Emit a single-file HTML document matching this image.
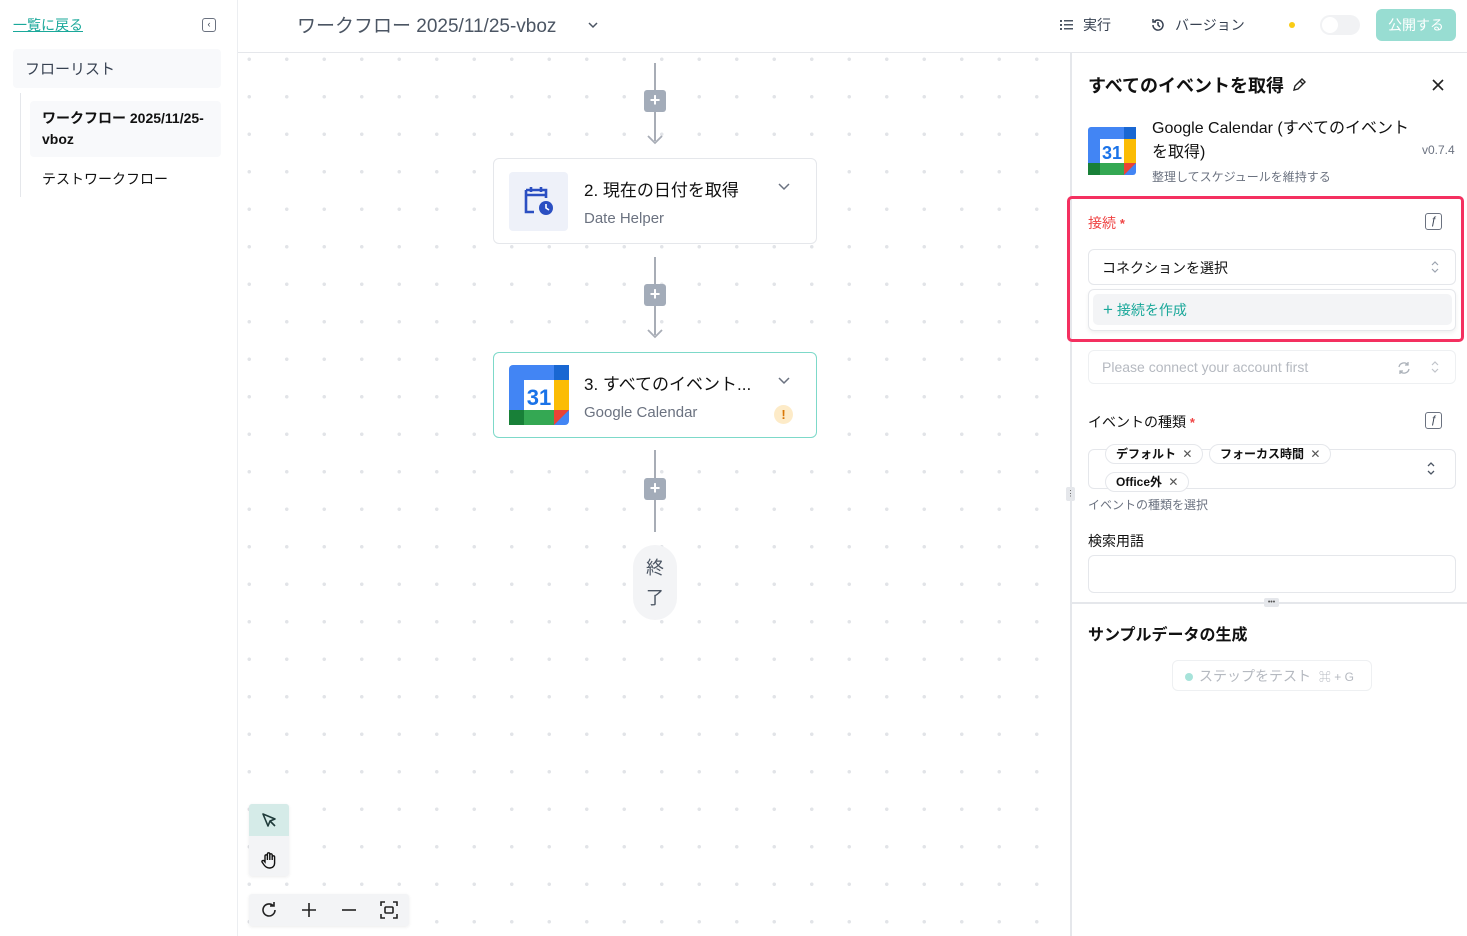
<!DOCTYPE html>
<html><head><meta charset="utf-8"><style>
*{box-sizing:border-box;margin:0;padding:0}
body{width:1467px;height:936px;overflow:hidden;position:relative;background:#fff;font-family:"Liberation Sans","Noto Sans CJK JP",sans-serif;color:#1f2937}
.abs{position:absolute}
.canvas{left:238px;top:53px;width:833px;height:883px;background-color:#fff;background-image:radial-gradient(circle,#e2e4e8 1.6px,transparent 2px);background-size:37.5px 37.5px;background-position:-7.5px -12.5px}
.node{background:#fff;border:1px solid #e5e7eb;border-radius:6px}
.line{background:#a8adb6;width:2px}
.plus{width:22px;height:22px;background:#a3acb9;border-radius:3px;color:#fff;font-size:18px;line-height:21px;text-align:center;font-weight:bold}
.chip{position:absolute;height:20px;border:1px solid #e5e7eb;border-radius:10px;font-size:12px;font-weight:bold;padding:0 10px;line-height:18px;background:#fff;color:#111}
.fx{width:17px;height:17px;border:1.5px solid #6b7280;border-radius:3px;font-size:11px;font-style:italic;text-align:center;line-height:14px;color:#374151}
.ast{color:#ef4444;font-size:13px;font-weight:bold}
</style></head><body>
<div class="abs" style="left:0;top:0;width:238px;height:936px;border-right:1px solid #eceef1;background:#fff"></div>
<div class="abs" style="left:13px;top:15px;font-size:14px;color:#1aa89a;text-decoration:underline">一覧に戻る</div>
<div class="abs" style="left:202px;top:18px;width:14px;height:14px;border:1.5px solid #6b7280;border-radius:3px;font-size:9px;line-height:11px;text-align:center;color:#374151">‹</div>
<div class="abs" style="left:13px;top:49px;width:208px;height:39px;background:#f8f9fb;border-radius:4px;font-size:15px;padding:9px 12px;color:#374151">フローリスト</div>
<div class="abs" style="left:20px;top:93px;width:1px;height:104px;background:#e5e7eb"></div>
<div class="abs" style="left:30px;top:101px;width:191px;height:56px;background:#f8f9fb;border-radius:4px;font-size:14px;font-weight:bold;padding:7px 12px;line-height:21px;color:#111">ワークフロー 2025/11/25-vboz</div>
<div class="abs" style="left:42px;top:169px;font-size:14px;color:#111">テストワークフロー</div>
<div class="abs" style="left:238px;top:0;width:1229px;height:53px;border-bottom:1px solid #e5e7eb;background:#fff"></div>
<div class="abs" style="left:297px;top:11px;font-size:19px;color:#4b5563">ワークフロー 2025/11/25-vboz</div>
<svg class="abs" style="left:587px;top:20px" width="12" height="10"><path d="M2 3l4 4 4-4" stroke="#4b5563" fill="none" stroke-width="1.5"/></svg>
<svg class="abs" style="left:1059px;top:18px" width="16" height="14"><g fill="#4b5563"><rect x="1" y="2" width="2" height="2"/><rect x="1" y="6" width="2" height="2"/><rect x="1" y="10" width="2" height="2"/><rect x="5" y="2" width="9" height="1.5"/><rect x="5" y="6" width="9" height="1.5"/><rect x="5" y="10" width="9" height="1.5"/></g></svg>
<div class="abs" style="left:1083px;top:15px;font-size:14px;color:#374151">実行</div>
<svg class="abs" style="left:1150px;top:17px" width="16" height="16"><path d="M3 8a5 5 0 1 0 1.5-3.5M3 2v3h3M8 5v3l2 2" stroke="#374151" fill="none" stroke-width="1.5"/></svg>
<div class="abs" style="left:1175px;top:15px;font-size:14px;color:#374151">バージョン</div>
<div class="abs" style="left:1289px;top:22px;width:6px;height:6px;border-radius:50%;background:#facc15"></div>
<div class="abs" style="left:1320px;top:15px;width:40px;height:20px;border-radius:10px;background:#f1f2f4"><div style="margin:2px;width:16px;height:16px;border-radius:50%;background:#fff"></div></div>
<div class="abs" style="left:1376px;top:9px;width:80px;height:32px;border-radius:6px;background:#98ddd2;color:#fff;font-size:14px;text-align:center;line-height:32px">公開する</div>
<div class="abs canvas"></div>
<div class="abs line" style="left:654px;top:63px;height:78px"></div>
<div class="abs plus" style="left:644px;top:90px">+</div>
<svg class="abs" style="left:647px;top:134px" width="16" height="12"><path d="M1 2l7 7 7-7" stroke="#a8adb6" fill="none" stroke-width="1.8"/></svg>
<div class="abs node" style="left:493px;top:158px;width:324px;height:86px"></div>
<div class="abs" style="left:509px;top:172px;width:59px;height:59px;background:#eef1f9;border-radius:4px"></div>
<svg class="abs" style="left:522px;top:184px" width="34" height="34"><path d="M4 6h20v8M4 6v22h8M4 11h20M9 3v5M19 3v5" stroke="#2b4fc2" stroke-width="2.6" fill="none"/><circle cx="24" cy="24" r="7" fill="#2b4fc2"/><path d="M24 20v4l3 2" stroke="#fff" stroke-width="1.6" fill="none"/></svg>
<div class="abs" style="left:584px;top:176px;font-size:17px;color:#111">2. 現在の日付を取得</div>
<div class="abs" style="left:584px;top:210px;font-size:15px;color:#6b7280">Date Helper</div>
<svg class="abs" style="left:777px;top:182px" width="14" height="10"><path d="M2 2l5 5 5-5" stroke="#6b7280" fill="none" stroke-width="1.5"/></svg>
<div class="abs line" style="left:654px;top:257px;height:78px"></div>
<div class="abs plus" style="left:644px;top:284px">+</div>
<svg class="abs" style="left:647px;top:328px" width="16" height="12"><path d="M1 2l7 7 7-7" stroke="#a8adb6" fill="none" stroke-width="1.8"/></svg>
<div class="abs node" style="left:493px;top:352px;width:324px;height:86px;border:1.5px solid #7dd9c9"></div>
<svg class="abs" style="left:509px;top:365px" width="60" height="60"><rect x="0" y="0" width="60" height="60" rx="4" fill="#4285f4"/><rect x="45" y="0" width="15" height="15" fill="#1967d2"/><rect x="45" y="15" width="15" height="30" fill="#fbbc04"/><rect x="0" y="45" width="15" height="15" fill="#188038"/><rect x="15" y="45" width="30" height="15" fill="#34a853"/><path d="M45 45h15L45 60z" fill="#ea4335"/><rect x="15" y="15" width="30" height="30" fill="#fff"/><text x="30" y="40" font-size="22" font-weight="bold" fill="#1a73e8" text-anchor="middle" font-family="Liberation Sans">31</text></svg>
<div class="abs" style="left:584px;top:370px;font-size:17px;color:#111">3. すべてのイベント...</div>
<div class="abs" style="left:584px;top:404px;font-size:15px;color:#6b7280">Google Calendar</div>
<svg class="abs" style="left:777px;top:376px" width="14" height="10"><path d="M2 2l5 5 5-5" stroke="#6b7280" fill="none" stroke-width="1.5"/></svg>
<div class="abs" style="left:774px;top:405px;width:19px;height:19px;border-radius:50%;background:#fdebc8;color:#d97706;font-weight:bold;font-size:13px;text-align:center;line-height:19px">!</div>
<div class="abs line" style="left:654px;top:450px;height:82px"></div>
<div class="abs plus" style="left:644px;top:478px">+</div>
<div class="abs" style="left:633px;top:545px;width:44px;height:75px;border-radius:22px;background:#f3f4f6;font-size:18px;color:#4b5563;text-align:center;line-height:30px;padding-top:8px">終<br>了</div>
<div class="abs" style="left:249px;top:804px;width:40px;height:72px;background:#f3f4f6;border-radius:3px;box-shadow:0 1px 3px rgba(0,0,0,.08)"><div style="height:32px;background:#d5ebe8;border-radius:3px 3px 0 0"></div></div>
<svg class="abs" style="left:260px;top:811px" width="18" height="18"><path d="M3 3l12 5-5 2-2 5z M10 10l5 5" stroke="#1f3b3a" fill="none" stroke-width="1.6" stroke-linejoin="round"/></svg>
<svg class="abs" style="left:259px;top:850px" width="20" height="20"><path d="M6 12V6a1.2 1.2 0 0 1 2.4 0v4V4a1.2 1.2 0 0 1 2.4 0v6V5a1.2 1.2 0 0 1 2.4 0v5V7a1.2 1.2 0 0 1 2.4 0v6c0 3-2 5-5 5-2.5 0-4-1-5.5-3L3 12a1.2 1.2 0 0 1 2-1.2z" stroke="#111" fill="none" stroke-width="1.4"/></svg>
<div class="abs" style="left:249px;top:894px;width:160px;height:32px;background:#f3f4f6;border-radius:3px;box-shadow:0 1px 3px rgba(0,0,0,.08)"></div>
<svg class="abs" style="left:259px;top:900px" width="20" height="20"><path d="M16 10a6 6 0 1 1-2-4.5M15 2v4h-4" stroke="#222" fill="none" stroke-width="1.6"/></svg>
<svg class="abs" style="left:299px;top:900px" width="20" height="20"><path d="M10 3v14M3 10h14" stroke="#222" stroke-width="1.6"/></svg>
<svg class="abs" style="left:339px;top:900px" width="20" height="20"><path d="M3 10h14" stroke="#222" stroke-width="1.6"/></svg>
<svg class="abs" style="left:379px;top:900px" width="20" height="20"><path d="M2 6V2h4M14 2h4v4M18 14v4h-4M6 18H2v-4" stroke="#222" fill="none" stroke-width="1.6"/><rect x="6" y="7" width="8" height="6" rx="1" stroke="#222" fill="none" stroke-width="1.6"/></svg>
<div class="abs" style="left:1070px;top:53px;width:2px;height:883px;background:#e5e7eb"></div>
<div class="abs" style="left:1066px;top:487px;width:9px;height:14px;background:#e5e7eb;border-radius:2px;font-size:8px;text-align:center;color:#555;line-height:14px">⋮</div>
<div class="abs" style="left:1088px;top:72px;font-size:18px;font-weight:bold;color:#111">すべてのイベントを取得</div>
<svg class="abs" style="left:1291px;top:77px" width="16" height="16"><path d="M3 13l1-4 7-7 3 3-7 7z M9 4l3 3" stroke="#222" fill="none" stroke-width="1.4"/></svg>
<svg class="abs" style="left:1431px;top:78px" width="14" height="14"><path d="M2 2l10 10M12 2L2 12" stroke="#222" stroke-width="1.6"/></svg>
<svg class="abs" style="left:1088px;top:127px" width="48" height="48"><rect x="0" y="0" width="48" height="48" rx="3" fill="#4285f4"/><rect x="36" y="0" width="12" height="12" fill="#1967d2"/><rect x="36" y="12" width="12" height="24" fill="#fbbc04"/><rect x="0" y="36" width="12" height="12" fill="#188038"/><rect x="12" y="36" width="24" height="12" fill="#34a853"/><path d="M36 36h12L36 48z" fill="#ea4335"/><rect x="12" y="12" width="24" height="24" fill="#fff"/><text x="24" y="32" font-size="18" font-weight="bold" fill="#1a73e8" text-anchor="middle" font-family="Liberation Sans">31</text></svg>
<div class="abs" style="left:1152px;top:117px;width:265px;font-size:16px;line-height:24px;color:#111">Google Calendar (すべてのイベントを取得)</div>
<div class="abs" style="left:1422px;top:143px;font-size:12px;color:#6b7280">v0.7.4</div>
<div class="abs" style="left:1152px;top:168px;font-size:12px;color:#6b7280">整理してスケジュールを維持する</div>
<div class="abs" style="left:1067px;top:196px;width:397px;height:146px;border:3px solid #f43060;border-radius:5px"></div>
<div class="abs" style="left:1088px;top:213px;font-size:14px;color:#ef4444">接続 <span class="ast">*</span></div>
<div class="abs fx" style="left:1425px;top:213px">ƒ</div>
<div class="abs" style="left:1088px;top:249px;width:368px;height:36px;border:1px solid #e5e7eb;border-radius:6px;font-size:14px;padding:8px 13px;color:#111">コネクションを選択</div>
<svg class="abs" style="left:1430px;top:260px" width="10" height="14"><path d="M2 5l3-3 3 3M2 9l3 3 3-3" stroke="#9ca3af" fill="none" stroke-width="1.2"/></svg>
<div class="abs" style="left:1088px;top:289px;width:368px;height:42px;border:1px solid #e5e7eb;border-radius:6px;box-shadow:0 2px 4px rgba(0,0,0,.06);background:#fff"></div>
<div class="abs" style="left:1093px;top:294px;width:359px;height:31px;background:#f3f4f6;border-radius:5px;font-size:14px;color:#1aa89a;padding:6px 10px"><span style="font-size:17px">+</span> 接続を作成</div>
<div class="abs" style="left:1088px;top:350px;width:368px;height:34px;border:1px solid #eef0f2;border-radius:6px;font-size:14px;padding:8px 13px;color:#b5b9c0">Please connect your account first</div>
<svg class="abs" style="left:1396px;top:360px" width="16" height="16"><path d="M3 7a5 5 0 0 1 9-2M13 9a5 5 0 0 1-9 2M12 2v3h-3M4 14v-3h3" stroke="#aab0b8" fill="none" stroke-width="1.3"/></svg>
<svg class="abs" style="left:1430px;top:360px" width="10" height="14"><path d="M2 5l3-3 3 3M2 9l3 3 3-3" stroke="#c0c4ca" fill="none" stroke-width="1.2"/></svg>
<div class="abs" style="left:1088px;top:412px;font-size:14px;color:#111">イベントの種類 <span class="ast">*</span></div>
<div class="abs fx" style="left:1425px;top:412px">ƒ</div>
<div class="abs" style="left:1088px;top:449px;width:368px;height:40px;border:1px solid #e5e7eb;border-radius:6px"></div>
<div class="chip" style="left:1105px;top:444px">デフォルト <span style="font-weight:normal;color:#555;margin-left:3px">✕</span></div>
<div class="chip" style="left:1209px;top:444px">フォーカス時間 <span style="font-weight:normal;color:#555;margin-left:3px">✕</span></div>
<div class="chip" style="left:1105px;top:472px">Office外 <span style="font-weight:normal;color:#555;margin-left:3px">✕</span></div>
<svg class="abs" style="left:1426px;top:461px" width="10" height="15"><path d="M2 5l3-3 3 3M2 10l3 3 3-3" stroke="#4b5563" fill="none" stroke-width="1.3"/></svg>
<div class="abs" style="left:1088px;top:496px;font-size:12px;color:#6b7280">イベントの種類を選択</div>
<div class="abs" style="left:1088px;top:531px;font-size:14px;color:#111">検索用語</div>
<div class="abs" style="left:1088px;top:555px;width:368px;height:38px;border:1px solid #e5e7eb;border-radius:6px"></div>
<div class="abs" style="left:1072px;top:602px;width:395px;height:2px;background:#e5e7eb"></div>
<div class="abs" style="left:1264px;top:598px;width:15px;height:9px;background:#e5e7eb;border-radius:2px;font-size:7px;line-height:9px;text-align:center;color:#555">•••</div>
<div class="abs" style="left:1088px;top:621px;font-size:16px;font-weight:bold;color:#111">サンプルデータの生成</div>
<div class="abs" style="left:1172px;top:660px;width:200px;height:31px;border:1px solid #eef0f2;border-radius:6px;font-size:14px;color:#b5b9c0;padding:5px 12px"><span style="display:inline-block;width:8px;height:8px;border-radius:50%;background:#a7e3da;margin-right:6px"></span>ステップをテスト <span style="font-size:12px;margin-left:4px">⌘ + G</span></div>
</body></html>
